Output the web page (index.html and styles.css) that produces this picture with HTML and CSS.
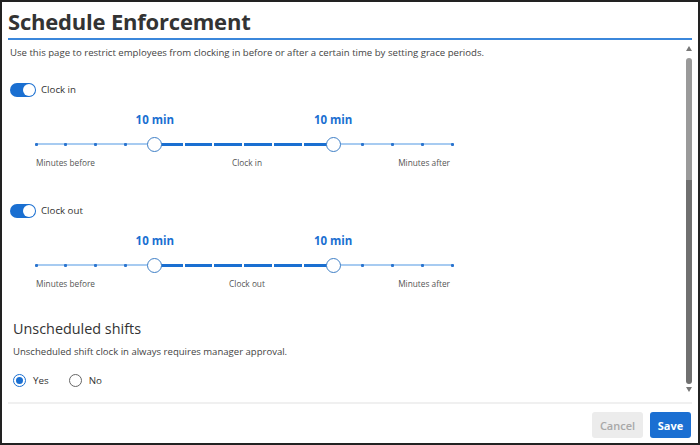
FILE: index.html
```html
<!DOCTYPE html>
<html>
<head>
<meta charset="utf-8">
<link rel="stylesheet" href="styles.css">
</head>
<body>
<div class="frame">
  <header class="head">
    <h1 class="title">Schedule Enforcement</h1>
  </header>
  <div class="main">
    <div class="content">
      <p class="intro">Use this page to restrict employees from clocking in before or after a certain time by setting grace periods.</p>

      <div class="toggle-row first">
        <span class="toggle"><span class="knob"></span></span>
        <span class="toggle-label">Clock in</span>
      </div>
      <div class="slider">
        <div class="values">
          <span class="value" style="left:28.571%">10 min</span>
          <span class="value" style="left:71.429%">10 min</span>
        </div>
        <div class="track">
          <div class="rail"></div>
          <div class="fill" style="left:28.571%;width:42.857%"></div>
          <span class="dot" style="left:0%"></span>
          <span class="dot" style="left:7.143%"></span>
          <span class="dot" style="left:14.286%"></span>
          <span class="dot" style="left:21.429%"></span>
          <span class="dot" style="left:78.571%"></span>
          <span class="dot" style="left:85.714%"></span>
          <span class="dot" style="left:92.857%"></span>
          <span class="dot" style="left:100%"></span>
          <span class="thumb" style="left:28.571%"></span>
          <span class="thumb" style="left:71.429%"></span>
        </div>
        <div class="labels">
          <span class="lab-l">Minutes before</span>
          <span class="lab-c">Clock in</span>
          <span class="lab-r">Minutes after</span>
        </div>
      </div>

      <div class="toggle-row second">
        <span class="toggle"><span class="knob"></span></span>
        <span class="toggle-label">Clock out</span>
      </div>
      <div class="slider">
        <div class="values">
          <span class="value" style="left:28.571%">10 min</span>
          <span class="value" style="left:71.429%">10 min</span>
        </div>
        <div class="track">
          <div class="rail"></div>
          <div class="fill" style="left:28.571%;width:42.857%"></div>
          <span class="dot" style="left:0%"></span>
          <span class="dot" style="left:7.143%"></span>
          <span class="dot" style="left:14.286%"></span>
          <span class="dot" style="left:21.429%"></span>
          <span class="dot" style="left:78.571%"></span>
          <span class="dot" style="left:85.714%"></span>
          <span class="dot" style="left:92.857%"></span>
          <span class="dot" style="left:100%"></span>
          <span class="thumb" style="left:28.571%"></span>
          <span class="thumb" style="left:71.429%"></span>
        </div>
        <div class="labels">
          <span class="lab-l">Minutes before</span>
          <span class="lab-c">Clock out</span>
          <span class="lab-r">Minutes after</span>
        </div>
      </div>

      <h2 class="sub">Unscheduled shifts</h2>
      <p class="sub-desc">Unscheduled shift clock in always requires manager approval.</p>
      <div class="radios">
        <label class="radio"><span class="circle checked"></span><span>Yes</span></label>
        <label class="radio"><span class="circle"></span><span>No</span></label>
      </div>
    </div>
    <div class="scrollbar">
      <span class="arrow up"></span>
      <div class="sb-thumb"><div class="sb-top"></div><div class="sb-bottom"></div></div>
      <span class="arrow down"></span>
    </div>
  </div>
  <footer class="foot">
    <button class="btn cancel">Cancel</button>
    <button class="btn save">Save</button>
  </footer>
</div>
</body>
</html>
```

FILE: styles.css
```css
* { box-sizing: border-box; }
html, body { margin: 0; padding: 0; background: #fff; }
body { font-family: "Open Sans", "Noto Sans", sans-serif; color: #333; }

.frame {
  width: 700px;
  height: 445px;
  border: 2px solid #222;
  display: flex;
  flex-direction: column;
  background: #fff;
}

.head { padding: 4px 6px 0 6px; }
.title {
  margin: 0;
  font-size: 22px;
  line-height: 30px;
  font-weight: 700;
  color: #333;
  padding-bottom: 2px;
  border-bottom: 2px solid #3b87db;
  letter-spacing: -0.2px;
}

.main {
  flex: 1;
  display: flex;
  min-height: 0;
}
.content {
  flex: 1;
  padding-left: 8px;
}
.intro {
  margin: 5px 0 0 0;
  font-size: 9.6px;
  line-height: 15px;
  color: #444;
}

.toggle-row {
  display: flex;
  align-items: center;
  gap: 5px;
  height: 15px;
}
.toggle-row.first { margin-top: 22px; }
.toggle-row.second { margin-top: 33px; }
.toggle {
  width: 26px;
  height: 14px;
  border-radius: 7px;
  background: #1a6fd1;
  display: flex;
  align-items: center;
  justify-content: flex-end;
  padding-right: 1px;
}
.knob {
  width: 12px;
  height: 12px;
  border-radius: 50%;
  background: #fff;
}
.toggle-label { font-size: 9.7px; color: #333; }

.slider {
  margin-left: 26px;
  width: 416px;
}
.values {
  position: relative;
  height: 16px;
  margin-top: 15px;
}
.value {
  position: absolute;
  top: 0;
  transform: translateX(-50%);
  font-size: 11.5px;
  line-height: 16px;
  font-weight: 700;
  color: #1a6fd1;
  white-space: nowrap;
}
.track {
  position: relative;
  height: 14px;
  margin-top: 9px;
}
.rail {
  position: absolute;
  left: 0; right: 0;
  top: 6px;
  height: 2px;
  background: #a7cbf1;
}
.fill {
  position: absolute;
  top: 5.5px;
  height: 3px;
  background: repeating-linear-gradient(90deg, #1a6fd1 0, #1a6fd1 27.7px, #fff 27.7px, #fff 29.71px);
}
.dot {
  position: absolute;
  top: 5.5px;
  width: 3px;
  height: 3px;
  margin-left: -1.5px;
  background: #2a74cf;
  border-radius: 1px;
}
.thumb {
  position: absolute;
  top: 0;
  width: 15px;
  height: 15px;
  margin-left: -7.5px;
  border-radius: 50%;
  background: #fff;
  border: 1.5px solid #3f7fc6;
}
.labels {
  display: grid;
  grid-template-columns: 1fr auto 1fr;
  margin-top: 5px;
  font-size: 8.3px;
  line-height: 14px;
  color: #555;
}
.lab-c { padding-left: 6px; }
.lab-r { text-align: right; padding-right: 2px; }

.sub {
  margin: 28px 0 0 3px;
  font-size: 14.4px;
  line-height: 20px;
  font-weight: 500;
  color: #333;
}
.sub-desc {
  margin: 6px 0 0 3px;
  font-size: 9.55px;
  line-height: 14px;
  color: #444;
}
.radios {
  display: flex;
  gap: 20px;
  margin: 13px 0 0 3px;
  height: 16px;
  align-items: center;
}
.radio {
  display: flex;
  align-items: center;
  gap: 7px;
  font-size: 9.8px;
  color: #333;
}
.circle {
  width: 13px;
  height: 13px;
  border-radius: 50%;
  border: 1.5px solid #666;
  display: flex;
  align-items: center;
  justify-content: center;
}
.circle.checked { border-color: #1a6fd1; }
.circle.checked::after {
  content: "";
  width: 7px;
  height: 7px;
  border-radius: 50%;
  background: #1a6fd1;
}

.scrollbar {
  width: 10px;
  margin-right: 4px;
  display: flex;
  flex-direction: column;
  align-items: center;
  padding-top: 6px;
}
.arrow {
  width: 0; height: 0;
  border-left: 3.5px solid transparent;
  border-right: 3.5px solid transparent;
}
.arrow.up { border-bottom: 5px solid #777; }
.arrow.down { border-top: 5px solid #777; margin-top: 3px; }
.sb-thumb {
  margin-top: 7px;
  width: 6px;
  height: 326px;
  border-radius: 3px;
  overflow: hidden;
  display: flex;
  flex-direction: column;
}
.sb-top { height: 122px; background: #9a9a9a; }
.sb-bottom { flex: 1; background: #707070; }

.foot {
  margin: 0 6px;
  border-top: 2px solid #f0f0f0;
  display: flex;
  justify-content: flex-end;
  gap: 7px;
  padding-top: 8px;
  padding-right: 1px;
  height: 41px;
}
.btn {
  height: 26px;
  border: none;
  border-radius: 3px;
  font-family: "Open Sans", "Noto Sans", sans-serif;
  font-size: 11px;
  font-weight: 600;
  padding: 0;
}
.cancel { width: 51px; background: #ececec; color: #a8a8a8; }
.save { width: 41px; background: #1b6fd2; color: #fff; font-weight: 700; }
```
